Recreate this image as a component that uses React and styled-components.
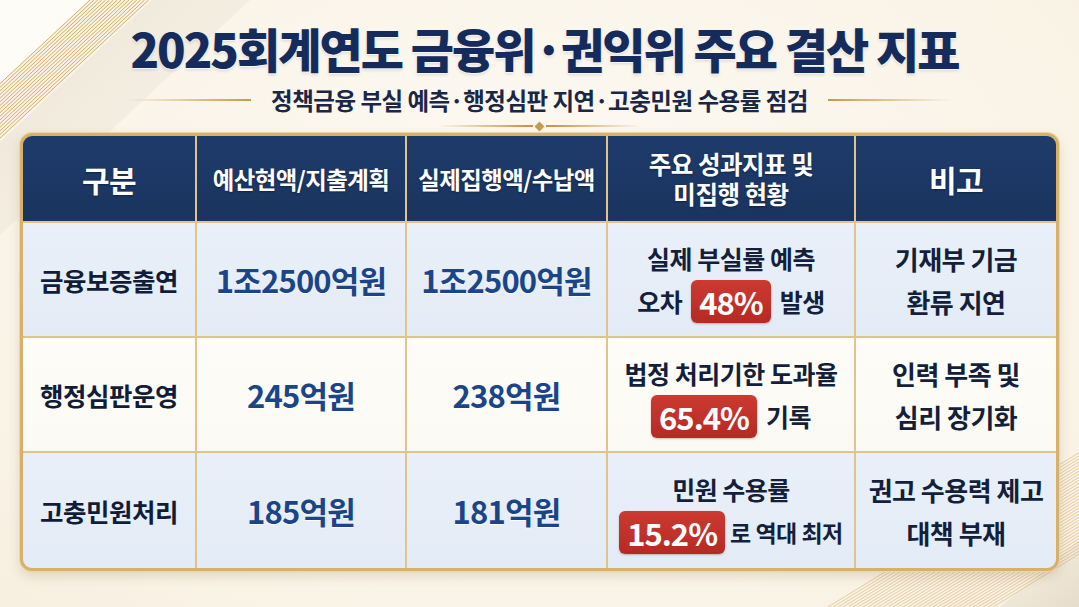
import React from 'react'
import styled, { createGlobalStyle } from 'styled-components'

const FONT = `'Noto Sans CJK KR', 'Noto Sans', sans-serif`

const GlobalStyle = createGlobalStyle`
  html, body {
    margin: 0;
    padding: 0;
    background: #faf5eb;
  }
  body {
    font-family: ${FONT};
  }
`

const rows = [
  {
    label: '금융보증출연',
    budget: '1조2500억원',
    spent: '1조2500억원',
    tint: true,
    first: '실제 부실률 예측',
    before: '오차',
    badge: '48%',
    after: '발생',
    note: ['기재부 기금', '환류 지연'],
  },
  {
    label: '행정심판운영',
    budget: '245억원',
    spent: '238억원',
    tint: false,
    first: '법정 처리기한 도과율',
    badge: '65.4%',
    after: '기록',
    note: ['인력 부족 및', '심리 장기화'],
  },
  {
    label: '고충민원처리',
    budget: '185억원',
    spent: '181억원',
    tint: true,
    first: '민원 수용률',
    badge: '15.2%',
    after: '로 역대 최저',
    tight: true,
    note: ['권고 수용력 제고', '대책 부재'],
  },
]

const CornerDecor = () => {
  const topLines = Array.from({ length: 16 }, (_, i) => 90 + i * 3.9)
  const bottomLines = Array.from({ length: 34 }, (_, i) => 828 + i * 5)
  return (
    <DecorSvg width="1079" height="607" viewBox="0 0 1079 607">
      <defs>
        <linearGradient id="shadeTL" x1="0" y1="0" x2="1" y2="1">
          <stop offset="0" stopColor="#9a8a70" stopOpacity="0.14" />
          <stop offset="1" stopColor="#9a8a70" stopOpacity="0" />
        </linearGradient>
        <linearGradient id="shadeBR" x1="0" y1="0" x2="1" y2="1">
          <stop offset="0" stopColor="#9a8a70" stopOpacity="0" />
          <stop offset="1" stopColor="#9a8a70" stopOpacity="0.18" />
        </linearGradient>
      </defs>
      <polygon points="0,0 90,0 0,84" fill="#fefcf7" />
      <polygon points="152,0 250,0 0,235 0,142" fill="url(#shadeTL)" />
      {topLines.map((d) => (
        <line
          key={d}
          x1={d}
          y1="0"
          x2="0"
          y2={d * 0.93}
          stroke="#cf9f4e"
          strokeOpacity="0.85"
          strokeWidth="1"
        />
      ))}
      <polygon points="1000,607 1079,607 1079,540" fill="url(#shadeBR)" />
      {bottomLines.map((x) => (
        <line
          key={x}
          x1={x}
          y1="607"
          x2={x + 270}
          y2="441"
          stroke="#d4ae66"
          strokeOpacity="0.6"
          strokeWidth="0.9"
        />
      ))}
    </DecorSvg>
  )
}

const App = () => {
  return (
    <>
      <GlobalStyle />
      <Page>
        <CornerDecor />
        <Content>
          <Title>2025회계연도 금융위·권익위 주요 결산 지표</Title>
          <SubtitleRow>
            <Rule side="left" />
            <Subtitle>정책금융 부실 예측·행정심판 지연·고충민원 수용률 점검</Subtitle>
            <Rule side="right" />
          </SubtitleRow>
          <Ornament>
            <OrnamentLine side="left" />
            <Diamond />
            <OrnamentLine side="right" />
          </Ornament>
          <Frame>
            <Grid>
              <HeadCell size={30}>구분</HeadCell>
              <HeadCell size={23.4}>예산현액/지출계획</HeadCell>
              <HeadCell size={23.4}>실제집행액/수납액</HeadCell>
              <HeadCell size={24.5}>
                <HeadLine>주요 성과지표 및</HeadLine>
                <HeadLine>미집행 현황</HeadLine>
              </HeadCell>
              <HeadCell size={30}>비고</HeadCell>

              {rows.map((row) => (
                <React.Fragment key={row.label}>
                  <Cell tint={row.tint}>
                    <Label>{row.label}</Label>
                  </Cell>
                  <Cell tint={row.tint}>
                    <Amount>{row.budget}</Amount>
                  </Cell>
                  <Cell tint={row.tint}>
                    <Amount>{row.spent}</Amount>
                  </Cell>
                  <Cell tint={row.tint}>
                    <TextLine size={25}>{row.first}</TextLine>
                    <TextLine size={row.tight ? 23 : 25} gap={row.tight ? 5 : 9}>
                      {row.before && <span>{row.before}</span>}
                      <Badge>{row.badge}</Badge>
                      <span>{row.after}</span>
                    </TextLine>
                  </Cell>
                  <Cell tint={row.tint}>
                    {row.note.map((n) => (
                      <TextLine key={n} size={26}>
                        {n}
                      </TextLine>
                    ))}
                  </Cell>
                </React.Fragment>
              ))}
            </Grid>
          </Frame>
        </Content>
      </Page>
    </>
  )
}

const Page = styled.div`
  position: relative;
  width: 1079px;
  height: 607px;
  overflow: hidden;
  background: radial-gradient(ellipse at 50% 40%, #fdfaf3 0%, #faf4e8 70%, #f7efe0 100%);
`

const DecorSvg = styled.svg`
  position: absolute;
  left: 0;
  top: 0;
  pointer-events: none;
`

const Content = styled.div`
  position: relative;
  display: flex;
  flex-direction: column;
  align-items: center;
`

const Title = styled.h1`
  margin: 20px 0 0 10px;
  height: 56px;
  line-height: 56px;
  font-size: 47px;
  font-weight: 900;
  letter-spacing: -2px;
  color: #142b5c;
  white-space: nowrap;
  text-shadow: 0 1px 1px rgba(255, 255, 255, 0.8), 0 2px 3px rgba(20, 43, 92, 0.15);
`

const SubtitleRow = styled.div`
  margin-top: 10px;
  height: 28px;
  display: flex;
  align-items: center;
  gap: 20px;
`

const Subtitle = styled.div`
  font-size: 23.5px;
  font-weight: 700;
  line-height: 28px;
  color: #1a2747;
  letter-spacing: -0.5px;
  white-space: nowrap;
`

const Rule = styled.div`
  width: 125px;
  height: 1.5px;
  background: linear-gradient(
    ${(p) => (p.side === 'left' ? '90deg' : '270deg')},
    rgba(196, 150, 72, 0) 0%,
    #c8994c 100%
  );
`

const Ornament = styled.div`
  margin-top: 7px;
  height: 10px;
  display: flex;
  align-items: center;
  gap: 3px;
`

const OrnamentLine = styled.div`
  width: 96px;
  height: 2px;
  background: linear-gradient(
    ${(p) => (p.side === 'left' ? '90deg' : '270deg')},
    rgba(196, 150, 72, 0) 0%,
    #c49045 100%
  );
`

const Diamond = styled.div`
  width: 7px;
  height: 7px;
  transform: rotate(45deg);
  background: #c9994f;
`

const Frame = styled.div`
  margin-top: 2px;
  width: 1033px;
  height: 432px;
  border: 3px solid #d7b169;
  border-radius: 12px;
  overflow: hidden;
  background: #dfc58d;
  box-shadow: 0 0 0 1px #ecd6a2, 0 5px 12px rgba(110, 80, 30, 0.18);
`

const Grid = styled.div`
  display: grid;
  grid-template-columns: 172px 208px 199px 246px 1fr;
  grid-template-rows: 85px 113px 113px 1fr;
  gap: 2px;
  height: 100%;
`

const HeadCell = styled.div`
  display: flex;
  flex-direction: column;
  align-items: center;
  justify-content: center;
  text-align: center;
  background: linear-gradient(180deg, #1e3b6b 0%, #1a345f 100%);
  color: #ffffff;
  font-size: ${(p) => p.size}px;
  font-weight: 700;
  letter-spacing: -0.5px;
  white-space: nowrap;
  text-shadow: 0 1px 2px rgba(0, 0, 0, 0.35);
`

const HeadLine = styled.span`
  display: block;
  line-height: 30px;
`

const Cell = styled.div`
  display: flex;
  flex-direction: column;
  align-items: center;
  justify-content: center;
  background: ${(p) =>
    p.tint
      ? 'linear-gradient(180deg, #e9f0f9 0%, #e3ebf6 100%)'
      : 'linear-gradient(180deg, #fefdf9 0%, #fbf9f3 100%)'};
`

const Label = styled.div`
  font-size: 25.5px;
  font-weight: 700;
  color: #111d38;
  letter-spacing: -0.5px;
  white-space: nowrap;
`

const Amount = styled.div`
  font-size: 31px;
  font-weight: 700;
  color: #1a4589;
  letter-spacing: -0.8px;
  white-space: nowrap;
  text-shadow: 0 1px 1px rgba(255, 255, 255, 0.9);
`

const TextLine = styled.div`
  height: 43px;
  display: flex;
  align-items: center;
  gap: ${(p) => p.gap || 0}px;
  font-size: ${(p) => p.size}px;
  font-weight: 700;
  color: #131f3b;
  white-space: nowrap;
  letter-spacing: -0.5px;
`

const Badge = styled.span`
  display: inline-flex;
  align-items: center;
  height: 43px;
  padding: 0 8px;
  border-radius: 6px;
  background: linear-gradient(180deg, #cc3a31 0%, #b52a24 100%);
  color: #ffffff;
  font-size: 31px;
  font-weight: 700;
  letter-spacing: -1px;
  box-shadow: 0 1px 2px rgba(120, 20, 20, 0.3);
`

export default App
